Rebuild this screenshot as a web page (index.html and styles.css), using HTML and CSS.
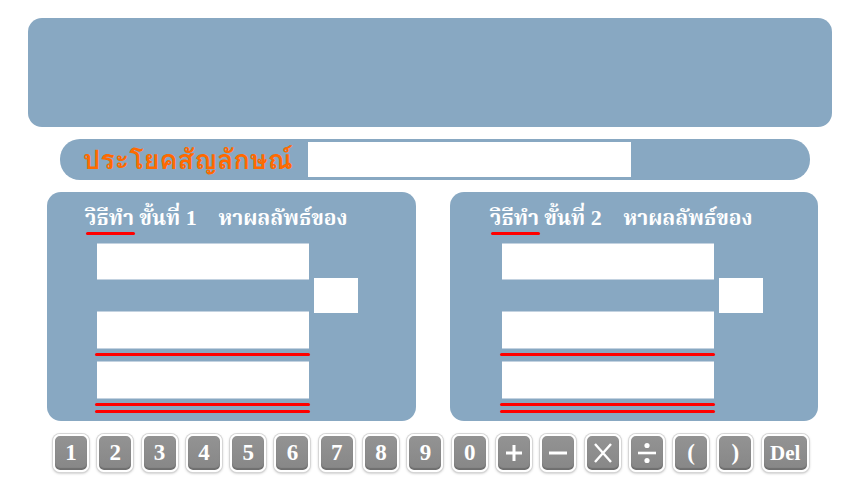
FILE: index.html
```html
<!DOCTYPE html>
<html lang="th">
<head>
<meta charset="utf-8">
<title>ประโยคสัญลักษณ์</title>
<link rel="stylesheet" href="styles.css">
</head>
<body>
<div class="page">
  <div class="top-panel"></div>

  <div class="sentence-bar">
    <span class="sentence-label">ประโยคสัญลักษณ์</span>
    <div class="sentence-input"></div>
  </div>

  <div class="panels">
    <section class="step-panel">
      <h2 class="step-title"><span class="ul">วิธีทำ</span> ขั้นที่ <span class="num">1</span>&nbsp;&nbsp;&nbsp; หาผลลัพธ์ของ</h2>
      <div class="work">
        <div class="stack">
          <div class="box"></div>
          <div class="box gap"></div>
          <div class="red-line"></div>
          <div class="box after-line"></div>
          <div class="red-line"></div>
          <div class="red-line second"></div>
        </div>
        <div class="side-box"></div>
      </div>
    </section>

    <section class="step-panel">
      <h2 class="step-title"><span class="ul">วิธีทำ</span> ขั้นที่ <span class="num">2</span>&nbsp;&nbsp;&nbsp; หาผลลัพธ์ของ</h2>
      <div class="work">
        <div class="stack">
          <div class="box"></div>
          <div class="box gap"></div>
          <div class="red-line"></div>
          <div class="box after-line"></div>
          <div class="red-line"></div>
          <div class="red-line second"></div>
        </div>
        <div class="side-box"></div>
      </div>
    </section>
  </div>

  <div class="keypad">
    <div class="key">1</div>
    <div class="key">2</div>
    <div class="key">3</div>
    <div class="key">4</div>
    <div class="key">5</div>
    <div class="key">6</div>
    <div class="key">7</div>
    <div class="key">8</div>
    <div class="key">9</div>
    <div class="key">0</div>
    <div class="key"><svg width="20" height="20" viewBox="0 0 20 20"><path d="M10 2V18M2 10H18" stroke="#fff" stroke-width="3" fill="none"/></svg></div>
    <div class="key"><svg width="22" height="20" viewBox="0 0 22 20"><path d="M2 10H20" stroke="#fff" stroke-width="3" fill="none"/></svg></div>
    <div class="key"><svg width="22" height="20" viewBox="0 0 22 20"><path d="M3 1L19 19M19 1L3 19" stroke="#fff" stroke-width="2.4" fill="none"/></svg></div>
    <div class="key"><svg width="22" height="24" viewBox="0 0 22 24"><path d="M2 12H20" stroke="#fff" stroke-width="2.6" fill="none"/><circle cx="11" cy="4.5" r="2.6" fill="#fff"/><circle cx="11" cy="19.5" r="2.6" fill="#fff"/></svg></div>
    <div class="key">(</div>
    <div class="key">)</div>
    <div class="key wide">Del</div>
  </div>
</div>
</body>
</html>
```

FILE: styles.css
```css
html, body {
  margin: 0;
  padding: 0;
  background: #ffffff;
}

.page {
  width: 860px;
  height: 485px;
  overflow: hidden;
  padding-top: 18px;
  box-sizing: border-box;
}

.top-panel {
  margin-left: 28px;
  width: 804px;
  height: 109px;
  background: #88a8c2;
  border-radius: 14px;
}

.sentence-bar {
  margin-top: 12px;
  margin-left: 60px;
  width: 750px;
  height: 41px;
  background: #88a8c2;
  border-radius: 20px;
  display: flex;
  align-items: center;
  box-sizing: border-box;
  padding-left: 23px;
}

.sentence-label {
  width: 225px;
  color: #ff6a00;
  font-family: "Tlwg Typo", "Loma", "Garuda", "Noto Sans Thai", "Noto Sans", sans-serif;
  font-weight: bold;
  font-size: 27px;
  line-height: 41px;
  white-space: nowrap;
}

.sentence-input {
  width: 323px;
  height: 35px;
  background: #ffffff;
}

.panels {
  margin-top: 12px;
  margin-left: 47px;
  display: flex;
  gap: 34px;
}

.step-panel {
  width: 369px;
  height: 229px;
  background: #88a8c2;
  border-radius: 14px;
  box-sizing: border-box;
  padding-left: 38px;
  padding-top: 13px;
}

.step-panel + .step-panel {
  width: 368px;
  padding-left: 40px;
}

.step-title {
  margin: 0;
  height: 39px;
  color: #ffffff;
  font-family: "Norasi", "Kinnari", "Noto Serif Thai", "Liberation Serif", serif;
  font-weight: bold;
  font-size: 21px;
  line-height: 25px;
  white-space: nowrap;
}

.step-title .num {
  font-family: "Liberation Serif", serif;
  font-size: 22px;
}

.ul {
  display: inline-block;
  position: relative;
}

.ul::after {
  content: "";
  position: absolute;
  left: 1px;
  right: -1px;
  bottom: -3px;
  height: 3px;
  border-radius: 2px;
  background: #ff0000;
}

.work {
  margin-left: 12px;
  display: grid;
  grid-template-columns: 212px 44px;
  column-gap: 5px;
  align-items: start;
}

.step-panel + .step-panel .work {
  margin-left: 12px;
}

.stack {
  display: flex;
  flex-direction: column;
}

.box {
  height: 35px;
  background: #ffffff;
  box-shadow: 0 1px 0 #c3d2e0, 0 -1px 0 #c3d2e0;
}

.box.gap {
  margin-top: 33px;
  height: 36px;
}

.box.after-line {
  margin-top: 6px;
  height: 36px;
}

.red-line {
  margin-top: 5px;
  margin-left: -2px;
  width: 215px;
  height: 3px;
  border-radius: 2px;
  background: #ff0000;
}

.red-line.second {
  margin-top: 4px;
}

.side-box {
  margin-top: 34px;
  height: 35px;
  background: #ffffff;
}

.keypad {
  margin-top: 13px;
  margin-left: 53px;
  display: flex;
  gap: 8.3px;
}

.key {
  width: 36px;
  height: 38px;
  box-sizing: border-box;
  border: 2px solid #ffffff;
  border-radius: 7px;
  background: linear-gradient(#939393, #878787);
  box-shadow: 0 0 0 1px #d6d6d6, 0 1px 3px rgba(0, 0, 0, 0.35), inset 0 -2px 1px #6f6f6f;
  color: #ffffff;
  font-family: "Liberation Serif", serif;
  font-weight: bold;
  font-size: 23px;
  display: flex;
  align-items: center;
  justify-content: center;
}

.key.wide {
  width: 47px;
  font-size: 21px;
}
```
